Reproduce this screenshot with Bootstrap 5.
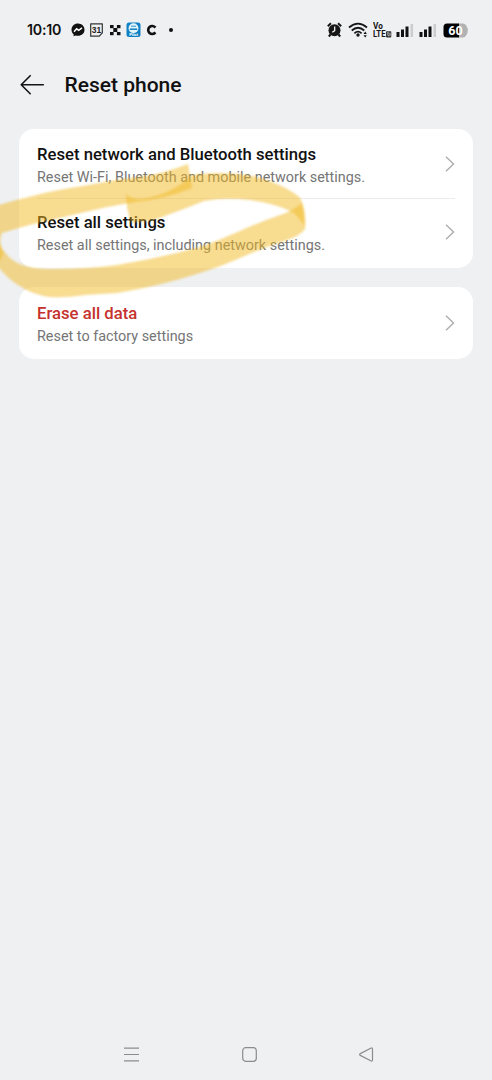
<!DOCTYPE html>
<html lang="en">
<head>
<meta charset="utf-8">
<meta name="viewport" content="width=device-width, initial-scale=1">
<title>Reset phone</title>
<link href="https://cdn.jsdelivr.net/npm/bootstrap@5.3.0/dist/css/bootstrap.min.css" rel="stylesheet">
<style>
body{background:#eff0f2;font-family:Roboto,"Liberation Sans",sans-serif;color:#111;height:1080px;overflow:hidden}
svg{display:block;flex:none}
.status{height:60px;padding:0 23px 0 27px}
.clock{font:600 14.2px/20px Inter,sans-serif;width:44px;white-space:nowrap;letter-spacing:-.2px}
.title-bar{height:50px;padding-left:20px;margin-bottom:18.500px}
.title-bar h1{font-size:21px;line-height:28px;font-weight:500;margin-left:19.500px}
.panel{border-radius:15px;margin:0 19px 19px;padding:0 18px}
.entry{height:69.500px;padding-top:15.500px}
.entry+.entry{border-top:1px solid #ececed;padding-top:13px;height:70px}
.solo{height:71.500px}
.name{font-size:16.680px;line-height:21px;font-weight:500;white-space:nowrap}
.hint{font-size:14.400px;line-height:20px;margin-top:3px;color:#757575;white-space:nowrap}
.danger-name{color:#c5312d}
.chev{margin:12px 0 0 0}
.marker{left:0;top:150px;pointer-events:none}
.softkeys{height:52px;padding:0 118px 0 124px}
</style>
<script src="https://cdn.jsdelivr.net/npm/bootstrap@5.3.0/dist/js/bootstrap.bundle.min.js"></script>
</head>
<body class="d-flex flex-column position-relative">
<header class="status d-flex align-items-center">
  <span class="clock">10:10</span>
  <!-- messenger -->
  <svg width="14" height="14" viewBox="0 0 14 14"><path d="M7 .5C3.200.5.500 3.200.500 6.700c0 1.900.8 3.500 2.100 4.600v2l2-.9c.8.2 1.600.4 2.400.4 3.800 0 6.500-2.700 6.500-6.100S10.800.5 7 .5z" fill="#111"/><path d="M3 8.700l2.700-2.900 2 1.500L11 4.800" fill="none" stroke="#fff" stroke-width="1.500"/></svg>
  <!-- calendar -->
  <svg class="ms-1" width="15" height="14" viewBox="0 0 15 14"><path d="M1.700.8h11.600v9l-3 3.400H1.700z" fill="none" stroke="#333" stroke-width="1.200" stroke-linejoin="round"/><text x="7.400" y="10" font-size="8.500" font-weight="700" text-anchor="middle" fill="#222" font-family="Liberation Sans, sans-serif">31</text></svg>
  <svg style="margin-left:5px" width="13" height="12" viewBox="0 0 13 12"><g fill="#111"><rect x="1" y="1" width="3.600" height="3.200"/><rect x="7.900" y="1" width="3.600" height="3.200"/><rect x="1" y="8" width="3.600" height="3.200"/><rect x="7.900" y="8" width="3.600" height="3.200"/><rect x="4.300" y="4" width="4" height="4"/></g></svg>
  <!-- blue app -->
  <svg style="margin-left:4px" width="15" height="16" viewBox="0 0 15 16"><rect x=".5" y=".5" width="14" height="14.500" rx="2.500" fill="#1180c4"/><circle cx="7.500" cy="6.200" r="4.900" fill="#e4f4fb"/><path d="M5 4.200h5" stroke="#4ba3d6" stroke-width="1.200"/><path d="M3.800 7.200h7.400" stroke="#1180c4" stroke-width="1.500"/><text x="7.500" y="13.600" font-size="4.200" font-weight="700" text-anchor="middle" fill="#fff">Pilot</text></svg>
  <svg style="margin-left:5px" width="12" height="12" viewBox="0 0 12 12"><path d="M9.400 3.600A4 4 0 1 0 9.400 8.400" fill="none" stroke="#111" stroke-width="2.600"/></svg>
  <svg style="margin-left:10px" width="6" height="6"><circle cx="3" cy="3" r="2" fill="#111"/></svg>
  <div class="ms-auto d-flex align-items-center">
    <!-- alarm -->
    <svg width="15" height="16" viewBox="0 0 15 16"><path d="M.8 4.300L4 1.300M14.200 4.300L11 1.300M3.500 12.500L1.800 14.500M11.500 12.500l1.700 2" stroke="#161616" stroke-width="2"/><circle cx="7.500" cy="8.200" r="6" fill="#161616"/><path d="M7.700 4.500v4.200L5.300 10.300" fill="none" stroke="#fff" stroke-width="1.200"/></svg>
    <!-- wifi -->
    <svg style="margin-left:6px" width="21" height="16" viewBox="0 0 21 16"><g fill="none" stroke="#161616" stroke-width="1.700"><path d="M1 5.500Q10-2.300 19 5.500"/><path d="M3.700 8.500Q10 3 16.300 8.500"/><path d="M6.400 11.300Q10 8 13.600 11.300"/></g><circle cx="10" cy="13" r="1.700" fill="#161616"/><path d="M15.500 12l1.700-2.500 1.700 2.500zM15.500 13.200l1.700 2.300 1.700-2.300z" fill="#161616"/></svg>
    <svg style="margin-left:4px" width="20" height="17" viewBox="0 0 20 17"><g font-weight="700" fill="#161616"><text x="0" y="7" font-size="8.200">Vo</text><text x="0" y="15.400" font-size="8.200" textLength="12.500" lengthAdjust="spacingAndGlyphs">LTE</text></g><rect x="13" y="9.300" width="5.300" height="6.100" rx=".8" fill="#333"/><path d="M14.300 10.700h1l-.5 1.500 .8 2M17 10.700v3.300" fill="none" stroke="#fff" stroke-width=".7"/></svg>
    <svg style="margin-left:3px" width="18" height="15" viewBox="0 0 18 15"><path d="M2 9v5M6.500 6.500V14M11 3.500V14" stroke="#111" stroke-width="3"/><path d="M15.800 1v13" stroke="#ccc" stroke-width="2.500"/></svg>
    <svg style="margin-left:5px" width="18" height="15" viewBox="0 0 18 15"><path d="M2 9v5M6.500 6.500V14M11 3.500V14" stroke="#111" stroke-width="3"/><path d="M15.800 1v13" stroke="#ccc" stroke-width="2.500"/></svg>
    <!-- battery -->
    <svg style="margin-left:6px" width="26" height="15" viewBox="0 0 26 15"><path d="M15 .5h5q2 0 3 1.800l1.500 3q1 2.200 0 4.400l-1.500 3q-1 1.800-3 1.800h-5z" fill="#b2b2b2"/><path d="M16 .5H4Q.500.500.500 4v7q0 3.500 3.500 3.500h12z" fill="#000"/><text x="12.500" y="12" font-size="12.500" font-weight="700" text-anchor="middle" fill="#fff">60</text></svg>
  </div>
</header>

<div class="title-bar d-flex align-items-center">
  <svg width="25" height="22" viewBox="0 0 25 22" fill="none" stroke="#151515" stroke-width="1.600" stroke-linecap="round" stroke-linejoin="round"><path d="M23.300 10.700H1.200M10.200 1.700L1.200 10.700l9 9"/></svg>
  <h1 class="mb-0">Reset phone</h1>
</div>

<main>
  <section class="panel bg-white">
    <div class="entry d-flex justify-content-between">
      <div><div class="name">Reset network and Bluetooth settings</div><div class="hint">Reset Wi-Fi, Bluetooth and mobile network settings.</div></div>
      <svg class="chev" width="10" height="16" viewBox="0 0 10 16"><path d="M1 .7l7.500 7.300L1 15.300" fill="none" stroke="#b0b0b0" stroke-width="1.500"/></svg>
    </div>
    <div class="entry d-flex justify-content-between">
      <div><div class="name">Reset all settings</div><div class="hint">Reset all settings, including network settings.</div></div>
      <svg class="chev" width="10" height="16" viewBox="0 0 10 16"><path d="M1 .7l7.500 7.300L1 15.300" fill="none" stroke="#b0b0b0" stroke-width="1.500"/></svg>
    </div>
  </section>
  <section class="panel bg-white">
    <div class="entry solo d-flex justify-content-between">
      <div><div class="name danger-name">Erase all data</div><div class="hint">Reset to factory settings</div></div>
      <svg class="chev" width="10" height="16" viewBox="0 0 10 16"><path d="M1 .7l7.500 7.300L1 15.300" fill="none" stroke="#b0b0b0" stroke-width="1.500"/></svg>
    </div>
  </section>
</main>

<!-- highlighter loop around "Reset all settings" -->
<svg class="marker position-absolute" width="320" height="155" viewBox="0 150 320 155">
  <defs><filter id="soft" x="-5%" y="-5%" width="110%" height="110%"><feGaussianBlur stdDeviation=".9"/></filter></defs>
  <g fill="#f2ba22" fill-opacity=".5" filter="url(#soft)">
    <path d="M188 164Q165 173 145 176Q113 180 83 186Q50 191 33 196Q15 200-5 206V267Q2 258 3 254Q-2 242 2 233Q18 228 33 224Q60 218 85 212Q110 206 135 202Q165 199 192 188Z"/>
    <path d="M-5 232Q-1 246 8 256Q20 269 50 269Q90 269 117 265Q160 258 200 247Q220 240 240 231Q262 221 283 214Q294 210 302 203Q307 216 305 229Q300 236 287 240Q262 248 240 258Q220 267 200 273Q160 286 117 293Q100 294 85 295Q65 298 50 297Q33 295 18 285Q4 276-5 262Z"/>
    <path d="M126 194Q132 201 148 198Q175 192 192 175Q220 171 248 175Q280 182 298 196Q305 201 304 226Q298 214 288 210Q273 203 250 200Q225 197 204 201Q187 208 170 214Q150 223 131 222Q126 208 126 194Z"/>
  </g>
</svg>

<nav class="softkeys mt-auto d-flex align-items-center justify-content-between">
  <svg width="15" height="15" viewBox="0 0 15 15"><path d="M0 1.200h15M0 7.500h15M0 13.800h15" stroke="#8b8c8e" stroke-width="1.200"/></svg>
  <svg width="15" height="15" viewBox="0 0 15 15"><rect x=".7" y=".7" width="13.600" height="13.600" rx="3" fill="none" stroke="#8b8c8e" stroke-width="1.200"/></svg>
  <svg width="15" height="15" viewBox="0 0 15 15"><path d="M1.300 6.600L11.700 1.200q1.800-.8 1.800 1v10.600q0 1.800-1.800 1L1.300 8.400q-1.400-.9 0-1.800z" fill="none" stroke="#8b8c8e" stroke-width="1.200"/></svg>
</nav>
</body>
</html>
